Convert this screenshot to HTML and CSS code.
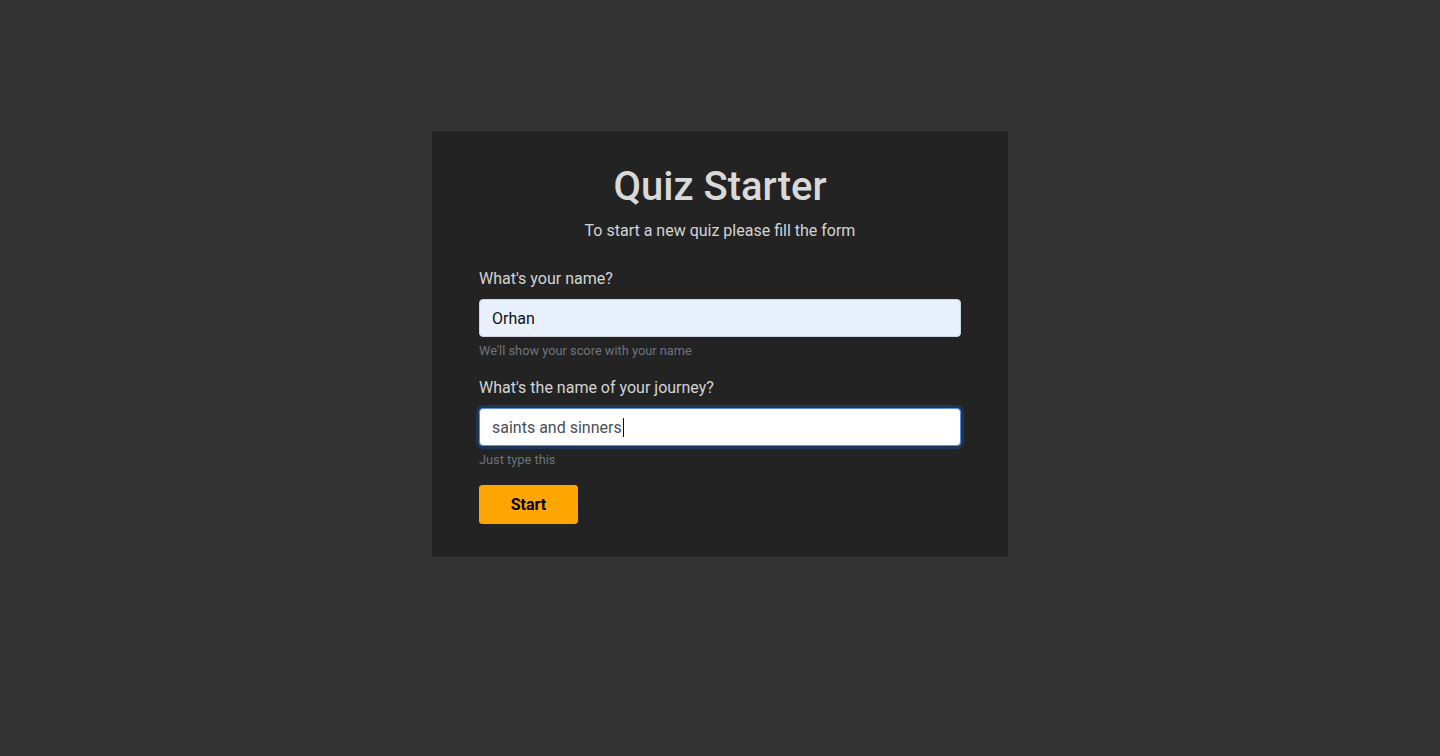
FILE: index.html
```html
<!DOCTYPE html>
<html lang="en">
<head>
<meta charset="utf-8">
<title>Quiz Starter</title>
<link rel="stylesheet" href="styles.css">
</head>
<body>
<main class="page">
  <section class="card">
    <h1 class="title">Quiz Starter</h1>
    <p class="subtitle">To start a new quiz please fill the form</p>
    <form class="form">
      <div class="group">
        <label class="label">What's your name?</label>
        <div class="control autofill" role="textbox">Orhan</div>
        <small class="help">We'll show your score with your name</small>
      </div>
      <div class="group">
        <label class="label">What's the name of your journey?</label>
        <div class="control focused" role="textbox">saints and sinners<span class="caret"></span></div>
        <small class="help">Just type this</small>
      </div>
      <button type="button" class="btn">Start</button>
    </form>
  </section>
</main>
</body>
</html>
```

FILE: styles.css
```css
* { box-sizing: border-box; }
html, body { margin: 0; padding: 0; }
body {
  background: #333333;
  font-family: Roboto, "Liberation Sans", sans-serif;
  color: #d4d4d4;
  height: 756px;
}
.page {
  display: flex;
  justify-content: center;
  padding-top: 131px;
}
.card {
  width: 576px;
  background: #232323;
  padding: 32px 47px 33px;
}
.title {
  margin: 0;
  text-align: center;
  font-size: 40px;
  font-weight: 500;
  line-height: 48px;
  color: #d9d9d9;
}
.subtitle {
  margin: 8px 0 0;
  text-align: center;
  font-size: 16px;
  line-height: 24px;
  color: #d4d4d4;
}
.form {
  margin-top: 24px;
  display: flex;
  flex-direction: column;
}
.group {
  display: flex;
  flex-direction: column;
  margin-bottom: 16px;
}
.label {
  font-size: 16px;
  line-height: 24px;
  color: #d4d4d4;
  margin-bottom: 8px;
}
.control {
  height: 38px;
  border: 1px solid #ced4da;
  border-radius: 4px;
  background: #fff;
  padding: 1px 12px 0;
  font-size: 16px;
  line-height: 36px;
  color: #495057;
  display: flex;
  align-items: center;
}
.control.autofill {
  background: #e8f0fe;
  color: #111;
  border-color: #cfd6df;
}
.control.focused {
  border-color: #5b8fd6;
  box-shadow: 0 0 0 3px rgba(13, 110, 253, 0.25);
}
.caret {
  display: inline-block;
  width: 1px;
  height: 19px;
  background: #111;
  margin-left: 1px;
}
.help {
  margin-top: 4px;
  font-size: 12.8px;
  line-height: 19px;
  color: #6c757d;
}
.btn {
  align-self: flex-start;
  width: 99px;
  height: 39px;
  border: 1px solid #ffa500;
  border-radius: 3px;
  background: #ffa500;
  color: #000;
  font-family: Roboto, "Liberation Sans", sans-serif;
  font-size: 16px;
  font-weight: 700;
  cursor: pointer;
}
```
